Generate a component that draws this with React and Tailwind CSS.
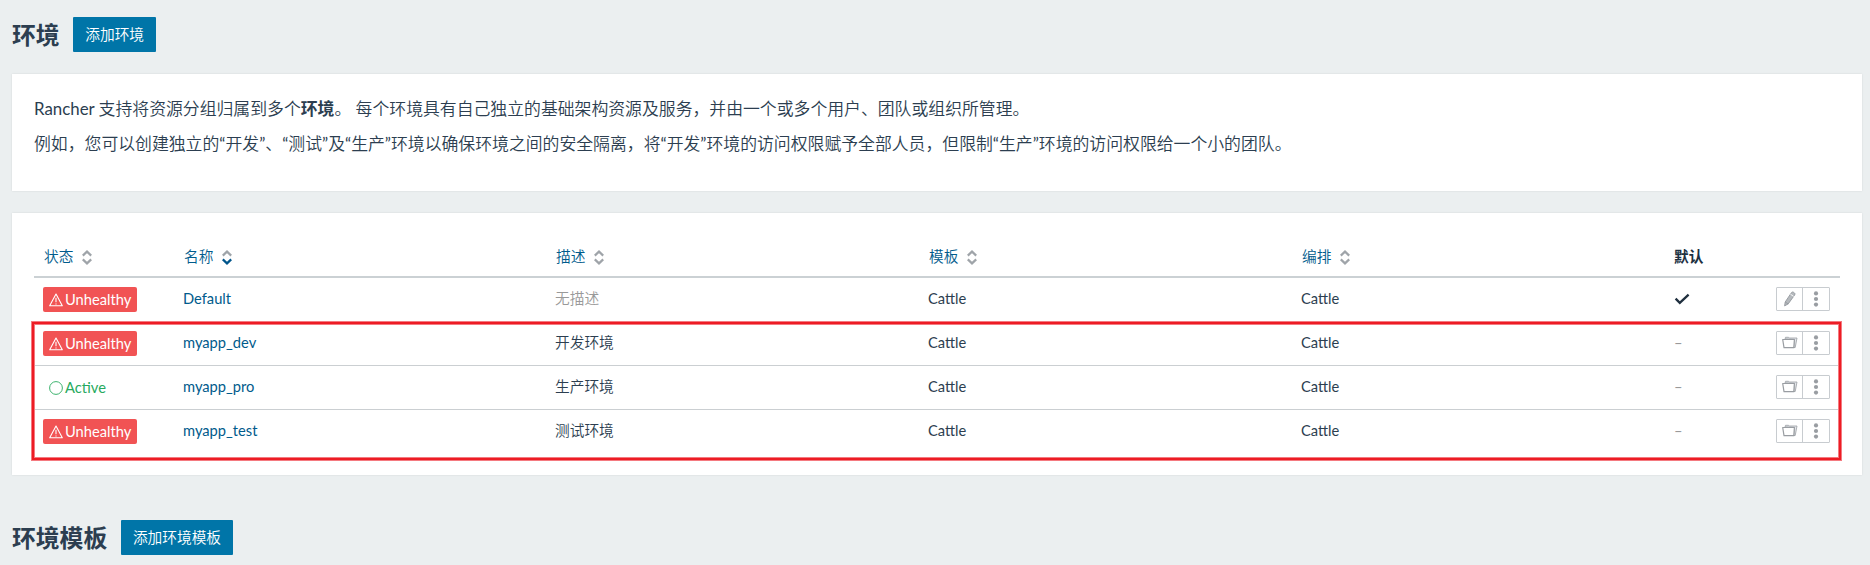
import React from 'react';

function Chevrons({ active }) {
  return (
    <svg width="10" height="15" viewBox="0 0 10 15" fill="none" strokeWidth="2.2" className="ml-[9px] mt-[2px] shrink-0">
      <path d="M0.8 5.6 L5 1.6 L9.2 5.6" stroke="#9fa4a9" />
      <path d="M0.8 9.4 L5 13.4 L9.2 9.4" stroke={active ? '#00558b' : '#9fa4a9'} />
    </svg>
  );
}

function AlertIcon() {
  return (
    <svg width="14" height="14" viewBox="0 0 14 14" fill="none" stroke="#fff" strokeWidth="1.1" strokeLinejoin="round" className="mt-[1px] shrink-0">
      <path d="M7 1 L13.3 12.8 L0.7 12.8 Z" />
      <path d="M7 4.8 V9.3 M7 10.4 V11.6" />
    </svg>
  );
}

function PencilIcon() {
  return (
    <svg width="14" height="16" viewBox="0 0 14 16" fill="#b5b9bd" stroke="#94999e" strokeWidth="0.9" strokeLinejoin="round">
      <path d="M1.6 14.9 L2.2 11 L8.4 1.7 Q9.3 0.5 10.6 1.3 L11.4 1.9 Q12.5 2.7 11.7 3.9 L5.2 12.9 Z" />
      <path d="M7.4 3.2 L10.7 5.4" stroke="#fff" />
      <path d="M2.2 11 L5.2 12.9" />
    </svg>
  );
}

function FolderIcon() {
  return (
    <svg width="16" height="13" viewBox="0 0 16 13" fill="none" stroke="#999da2" strokeWidth="1.2" strokeLinejoin="round">
      <path d="M3 2.8 L3.5 1.3 H6.6 L7.3 2 H15 L13.2 11.5 H11.8 L12.4 3.4 Z" fill="#e3e6ea" strokeWidth="0.8" />
      <path d="M0.7 3.5 H12.4 L11.8 11.6 H2 Z" fill="#fff" />
    </svg>
  );
}

function Dots() {
  return (
    <svg width="6" height="16" viewBox="0 0 6 16" fill="#999da2">
      <circle cx="3" cy="2.4" r="2.1" />
      <circle cx="3" cy="8" r="2.1" />
      <circle cx="3" cy="13.6" r="2.1" />
    </svg>
  );
}

function Status({ healthy }) {
  if (healthy) {
    return (
      <span className="inline-flex h-[25px] items-center pl-[6px] text-[#27aa5e]">
        <svg width="14" height="14" viewBox="0 0 14 14" fill="none" stroke="#27aa5e" strokeWidth="0.9" className="mt-[1px] shrink-0">
          <circle cx="7" cy="7" r="6.4" />
        </svg>
        <span className="mb-[1px] ml-[2px]">Active</span>
      </span>
    );
  }
  return (
    <span className="inline-flex h-[25px] w-[94px] items-center rounded-[2px] bg-[#f15354] pl-[6px] text-white">
      <AlertIcon />
      <span className="mb-[1px] ml-[2px]">Unhealthy</span>
    </span>
  );
}

const columns = 'grid grid-cols-[149px_372px_373px_373px_373px_165px]';

const rows = [
  { name: 'Default', description: null, isDefault: true },
  { name: 'myapp_dev', description: '开发环境' },
  { name: 'myapp_pro', description: '生产环境', healthy: true },
  { name: 'myapp_test', description: '测试环境' },
];

function Row({ row, last }) {
  return (
    <div className={`${columns} h-[44px] border-b pt-[9px] leading-[23px] ${last ? 'border-transparent' : 'border-[#cbcfd2]'}`}>
      <div className="flex items-start pl-[9px]"><Status healthy={row.healthy} /></div>
      <div className="text-[#005b8c]">{row.name}</div>
      <div className={row.description ? '' : 'text-[#999]'}>{row.description || '无描述'}</div>
      <div>Cattle</div>
      <div>Cattle</div>
      <div className="flex items-start justify-between pr-[9px]">
        {row.isDefault ? (
          <svg width="16" height="12" viewBox="0 0 16 12" fill="none" stroke="#20303f" strokeWidth="2.3" className="mt-[6px]">
            <path d="M1.6 5.6 L5.8 9.8 L14.6 1.6" />
          </svg>
        ) : (
          <span className="text-[#999]">–</span>
        )}
        <div className="flex h-[24px] w-[54px] rounded-[1px] border border-[#c8ccd0]">
          <div className="flex w-[26px] items-center justify-center border-r border-[#c8ccd0] pb-[1px]">
            {row.isDefault ? <PencilIcon /> : <FolderIcon />}
          </div>
          <div className="flex flex-1 items-center justify-center"><Dots /></div>
        </div>
      </div>
    </div>
  );
}

function SectionTitle({ title, action }) {
  return (
    <div className="flex h-[35px] items-center">
      <h1 className="pt-[1px] font-[Lato,'Noto_Sans_CJK_SC',sans-serif] text-[23.8px] font-bold leading-[35px]">{title}</h1>
      <button className="ml-[13.5px] h-[35px] rounded-[1px] bg-[#0075a8] px-[12.2px] text-[14.7px] leading-[35px] text-white">{action}</button>
    </div>
  );
}

export default function App() {
  return (
    <div className="h-[565px] overflow-hidden bg-[#ebeff0] pl-[12px] pr-[8px] pt-[17px] font-[Lato,'Noto_Sans_CJK_SC_DemiLight','Noto_Sans_CJK_SC_Light','Noto_Sans_CJK_SC',sans-serif] text-[14.7px] text-[#2c3e50]">
      <SectionTitle title="环境" action="添加环境" />

      <section className="mt-[22px] h-[117px] bg-white px-[22px] pt-[17px] text-[16.85px] leading-[35px] shadow-[0_0_2px_rgba(0,0,0,0.1)]">
        <p>Rancher 支持将资源分组归属到多个<b className="font-[Lato,'Noto_Sans_CJK_SC',sans-serif]">环境</b>。 每个环境具有自己独立的基础架构资源及服务，并由一个或多个用户、团队或组织所管理。</p>
        <p>例如，您可以创建独立的“开发”、“测试”及“生产”环境以确保环境之间的安全隔离，将“开发”环境的访问权限赋予全部人员，但限制“生产”环境的访问权限给一个小的团队。</p>
      </section>

      <section className="mt-[22px] h-[262px] bg-white px-[22px] pt-[23px] shadow-[0_0_2px_rgba(0,0,0,0.1)]">
        <div className="relative">
          <div className={`${columns} h-[42px] border-b-2 border-[#cbd1d4] leading-[40px] text-[#005b8c]`}>
            <div className="flex items-center pl-[10px]">状态<Chevrons /></div>
            <div className="flex items-center pl-px">名称<Chevrons active /></div>
            <div className="flex items-center pl-px">描述<Chevrons /></div>
            <div className="flex items-center pl-px">模板<Chevrons /></div>
            <div className="flex items-center pl-px">编排<Chevrons /></div>
            <div className="font-[Lato,'Noto_Sans_CJK_SC',sans-serif] font-bold text-[#20303f]">默认</div>
          </div>
          {rows.map((row, i) => (
            <Row key={row.name} row={row} last={i === rows.length - 1} />
          ))}
          <div className="absolute left-[-2px] top-[86px] h-[138px] w-[1809px] border-2 border-[#ed1c24] shadow-[0_0_0_1px_#f47a80,inset_0_0_0_1px_#f47a80]" />
        </div>
      </section>

      <div className="mt-[45px]">
        <SectionTitle title="环境模板" action="添加环境模板" />
      </div>
    </div>
  );
}
